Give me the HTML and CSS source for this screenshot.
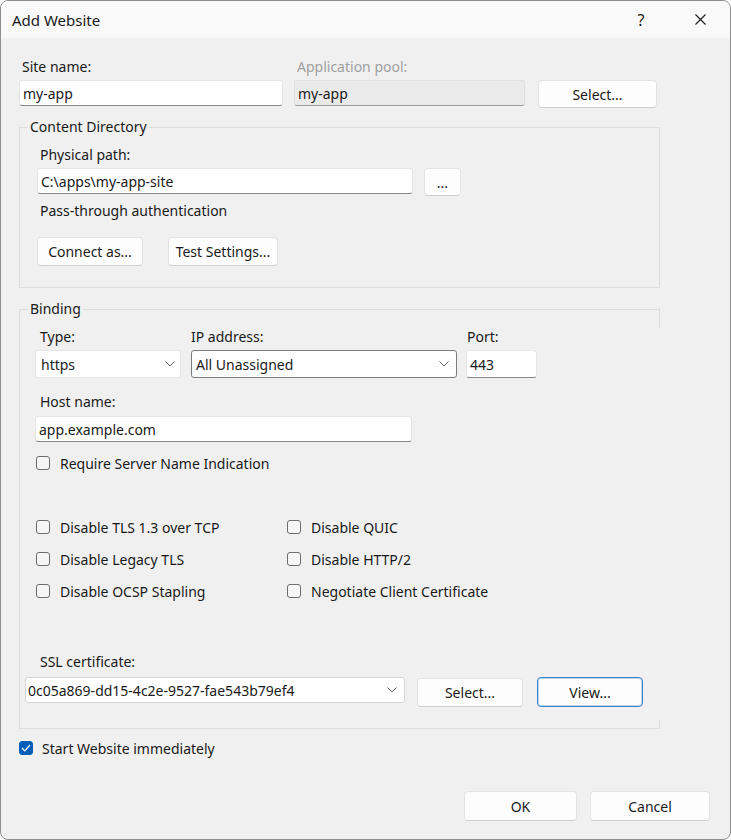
FILE: index.html
```html
<!DOCTYPE html>
<html lang="en">
<head>
  <meta charset="UTF-8">
  <title>Add Website</title>
  <link rel="stylesheet" href="styles.css">
</head>
<body>

  <div class="window">
    <div class="titlebar">
      <span class="title">Add Website</span>
      <span class="help">?</span>
      <span class="close">
        <svg width="11" height="11" viewBox="0 0 11 11"><path d="M0.5 0.5 L10.5 10.5 M10.5 0.5 L0.5 10.5" stroke="#1a1a1a" stroke-width="1.1" fill="none"/></svg>
      </span>
    </div>

    <div class="dialog">
      <div class="site-row">
        <div class="field">
          <label class="lbl site-lbl">Site name:</label>
          <input class="textbox" type="text" value="my-app">
        </div>
        <div class="field">
          <label class="lbl pool-lbl">Application pool:</label>
          <input class="textbox readonly" type="text" value="my-app" readonly>
        </div>
        <button class="btn pool-btn">Select...</button>
      </div>

      <fieldset class="group content-dir">
        <legend>Content Directory</legend>
        <div class="group-body cd-body">
          <label class="lbl indent3">Physical path:</label>
          <div class="path-row">
            <input class="textbox path-input" type="text" value="C:\apps\my-app-site">
            <button class="btn dots-btn">...</button>
          </div>
          <div class="lbl indent3 pass-lbl">Pass-through authentication</div>
          <div class="cd-buttons">
            <button class="btn connect-btn">Connect as...</button>
            <button class="btn test-btn">Test Settings...</button>
          </div>
        </div>
      </fieldset>

      <fieldset class="group binding">
        <legend>Binding</legend>
        <div class="group-body bind-body">
          <div class="bind-row">
            <div class="field type-field">
              <label class="lbl indent5">Type:</label>
              <div class="combo">
                <span>https</span>
                <svg width="10" height="6" viewBox="0 0 10 6"><polyline points="0.5,0.5 5,5 9.5,0.5" fill="none" stroke="#606060" stroke-width="1"/></svg>
              </div>
            </div>
            <div class="field ip-field">
              <label class="lbl">IP address:</label>
              <div class="combo combo-dark">
                <span>All Unassigned</span>
                <svg width="10" height="6" viewBox="0 0 10 6"><polyline points="0.5,0.5 5,5 9.5,0.5" fill="none" stroke="#606060" stroke-width="1"/></svg>
              </div>
            </div>
            <div class="field port-field">
              <label class="lbl indent1">Port:</label>
              <input class="textbox port-input" type="text" value="443">
            </div>
          </div>

          <div class="host">
            <label class="lbl indent5">Host name:</label>
            <input class="textbox host-input" type="text" value="app.example.com">
          </div>

          <div class="check sni">
            <span class="box"></span>
            <span>Require Server Name Indication</span>
          </div>

          <div class="check-grid">
            <div class="check"><span class="box"></span><span>Disable TLS 1.3 over TCP</span></div>
            <div class="check"><span class="box"></span><span>Disable QUIC</span></div>
            <div class="check"><span class="box"></span><span>Disable Legacy TLS</span></div>
            <div class="check"><span class="box"></span><span>Disable HTTP/2</span></div>
            <div class="check"><span class="box"></span><span>Disable OCSP Stapling</span></div>
            <div class="check"><span class="box"></span><span>Negotiate Client Certificate</span></div>
          </div>

          <label class="lbl indent5 ssl-lbl">SSL certificate:</label>
          <div class="ssl-row">
            <div class="combo combo-light ssl-combo">
              <span>0c05a869-dd15-4c2e-9527-fae543b79ef4</span>
              <svg width="10" height="6" viewBox="0 0 10 6"><polyline points="0.5,0.5 5,5 9.5,0.5" fill="none" stroke="#606060" stroke-width="1"/></svg>
            </div>
            <button class="btn ssl-select">Select...</button>
            <button class="btn btn-default view-btn">View...</button>
          </div>
        </div>
      </fieldset>

      <div class="check start">
        <span class="box checked">
          <svg width="10" height="8" viewBox="0 0 10 8"><polyline points="1,4 3.8,6.8 9,1" fill="none" stroke="#fff" stroke-width="1.2"/></svg>
        </span>
        <span>Start Website immediately</span>
      </div>

      <div class="footer">
        <button class="btn ok-btn">OK</button>
        <button class="btn cancel-btn">Cancel</button>
      </div>
    </div>
  </div>

</body>
</html>
```

FILE: styles.css
```css
body {
  margin: 0;
  background: #ffffff;
  font-family: 'Noto Sans', 'Open Sans', Arial, sans-serif;
  font-size: 14px;
  color: #1a1a1a;
}

.window {
  width: 731px;
  height: 840px;
  box-sizing: border-box;
  border: 1px solid #8e8e8e;
  border-radius: 8px;
  background: #f0f0f0;
  overflow: hidden;
}

/* title bar */
.titlebar {
  height: 37px;
  background: #f9f9f9;
  display: flex;
  align-items: center;
  padding-left: 11px;
}

.title {
  font-size: 15px;
  flex: 1;
}

.help {
  font-size: 16px;
  width: 12px;
  text-align: center;
  margin-right: 48px;
}

.close {
  display: flex;
  margin-right: 24px;
}

/* dialog content */
.dialog {
  padding: 19px 20px 0 18px;
}

.lbl {
  display: block;
  line-height: 20px;
  height: 20px;
  white-space: nowrap;
}

.site-lbl { margin-left: 3px; }
.pool-lbl { margin-left: 3px; color: #a0a0a0; }
.indent1 { margin-left: 1px; }
.indent3 { margin-left: 3px; }
.indent5 { margin-left: 5px; }

.site-row {
  display: grid;
  grid-template-columns: 264px 231px 119px;
  column-gap: 11px;
  align-items: start;
}

.field .textbox,
.field .combo {
  margin-top: 3px;
}

.textbox {
  display: block;
  box-sizing: border-box;
  height: 26px;
  width: 100%;
  padding: 0 3px;
  font: inherit;
  color: #1a1a1a;
  background: #ffffff;
  border: 1px solid #e6e6e6;
  border-bottom-color: #868686;
  border-radius: 3px;
  outline: none;
}

.textbox.readonly {
  background: #eaeaea;
  border-color: #e0e0e0;
  border-bottom-color: #9c9c9c;
}

.btn {
  box-sizing: border-box;
  height: 28px;
  font: inherit;
  color: #1a1a1a;
  background: #fdfdfd;
  border: 1px solid #e3e3e3;
  border-bottom-color: #cfcfcf;
  border-radius: 4px;
  padding: 0;
  cursor: pointer;
}

.btn:hover {
  background: #f5f5f5;
}

.btn-default {
  border: 1px solid #3b82cf;
  box-shadow: inset 0 0 0 1px #b9d4f0;
}

.pool-btn {
  width: 119px;
  margin-top: 23px;
  margin-left: 2px;
}

/* group boxes */
.group {
  box-sizing: border-box;
  width: 641px;
  margin: 0;
  padding: 0;
  border: 1px solid #dcdcdc;
  position: relative;
}

.group legend {
  margin-left: 8px;
  padding: 0 2px;
  line-height: 20px;
}

.content-dir {
  margin-top: 9px;
}

.cd-body {
  padding: 8px 0 21px 17px;
}

.path-row {
  display: flex;
  align-items: flex-start;
  margin-top: 3px;
}

.path-input {
  width: 376px;
}

.dots-btn {
  width: 37px;
  margin-left: 11px;
}

.pass-lbl {
  margin-top: 5px;
}

.cd-buttons {
  display: flex;
  margin-top: 16px;
}

.cd-buttons .btn {
  height: 29px;
}

.connect-btn { width: 106px; }
.test-btn { width: 110px; margin-left: 25px; }

.binding {
  margin-top: 11px;
  border-right: none;
}

/* the right edge is only drawn near the corners */
.binding::before,
.binding::after {
  content: "";
  position: absolute;
  right: 0;
  width: 1px;
  background: #dcdcdc;
}

.binding::before { top: -11px; height: 20px; }
.binding::after { bottom: 0; height: 8px; }

.bind-body {
  padding: 8px 0 21px 15px;
}

.bind-row {
  display: flex;
  align-items: flex-start;
}

.type-field { width: 146px; }
.ip-field { width: 266px; margin-left: 10px; }
.port-field { width: 71px; margin-left: 9px; }

.port-input {
  height: 28px;
}

.combo {
  box-sizing: border-box;
  height: 28px;
  display: flex;
  align-items: center;
  justify-content: space-between;
  background: #ffffff;
  border: 1px solid #e6e6e6;
  border-radius: 3px;
  padding: 0 5px 0 5px;
}

.combo-dark {
  border-color: #7c7c7c;
  padding-left: 4px;
  padding-right: 7px;
}

.combo-light {
  border-color: #d6d6d6;
}

.host {
  margin-top: 14px;
}

.host-input {
  width: 377px;
  margin-top: 4px;
}

.check {
  display: flex;
  align-items: center;
  height: 20px;
  white-space: nowrap;
}

.box {
  box-sizing: border-box;
  width: 14px;
  height: 14px;
  border: 1px solid #6c6c6c;
  border-radius: 3px;
  background: #f6f6f6;
  margin-right: 10px;
  display: flex;
  align-items: center;
  justify-content: center;
}

.box.checked {
  background: #005fb8;
  border-color: #005fb8;
}

.sni {
  margin-top: 11px;
  margin-left: 1px;
}

.check-grid {
  display: grid;
  grid-template-columns: 251px 251px;
  row-gap: 12px;
  margin-top: 44px;
  margin-left: 1px;
}

.ssl-lbl {
  margin-top: 51px;
}

.ssl-row {
  display: flex;
  align-items: flex-start;
  margin-top: 5px;
}

.ssl-combo {
  width: 380px;
  height: 26px;
  margin-left: -10px;
  padding-left: 2px;
  padding-right: 7px;
}

.ssl-select {
  width: 106px;
  height: 29px;
  margin-left: 12px;
  margin-top: 1px;
}

.view-btn {
  width: 106px;
  height: 30px;
  margin-left: 14px;
}

.start {
  margin-top: 9px;
}

.start .box {
  margin-right: 9px;
}

.footer {
  display: flex;
  justify-content: flex-end;
  gap: 13px;
  margin-top: 33px;
}

.footer .btn {
  height: 30px;
}

.ok-btn { width: 113px; }
.cancel-btn { width: 120px; }
```
